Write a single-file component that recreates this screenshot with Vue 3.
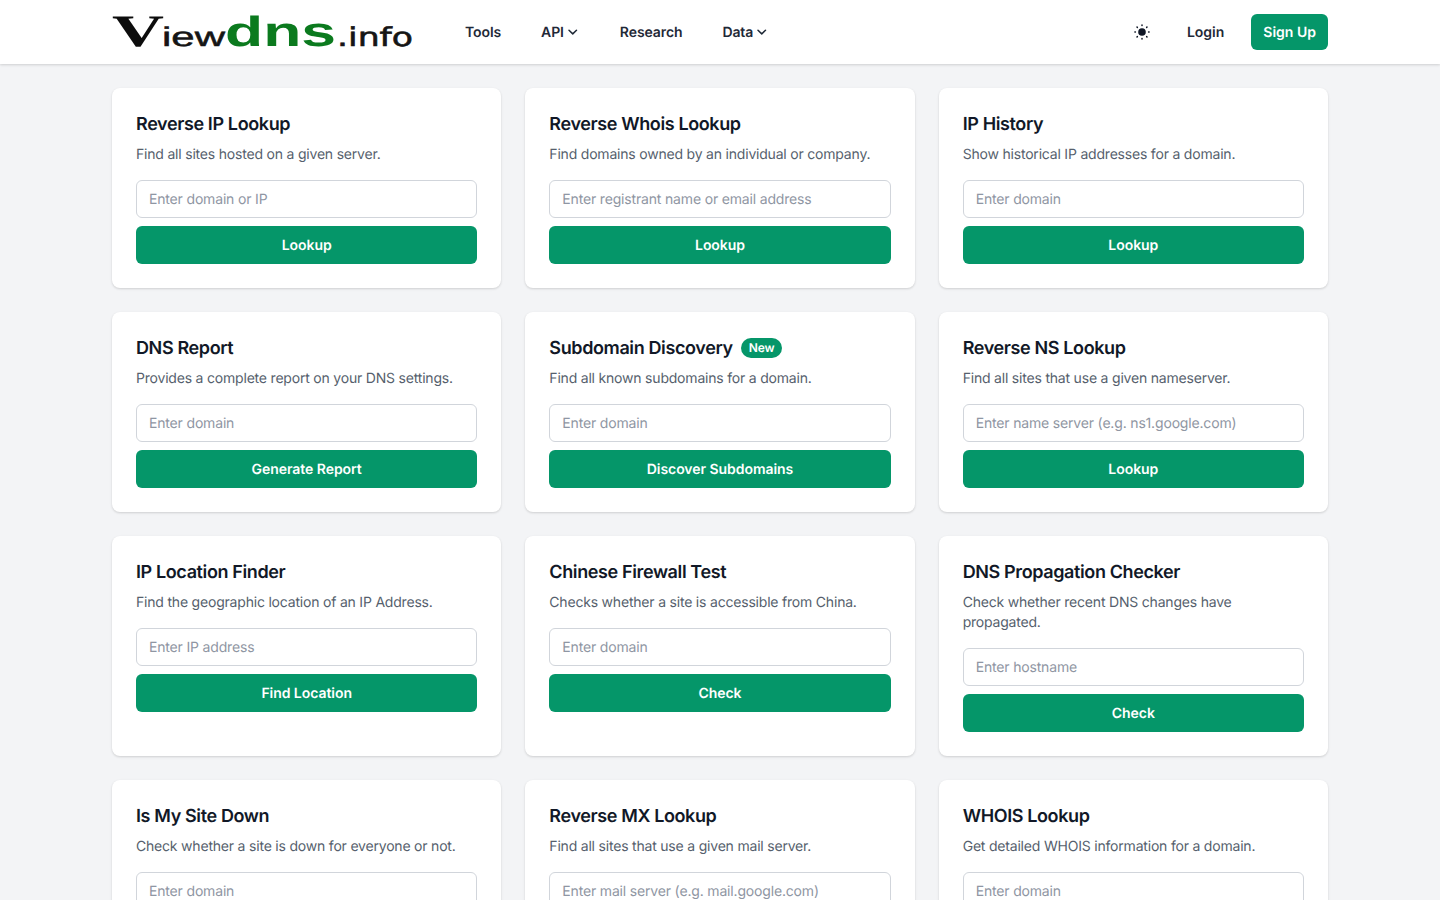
<script setup>
  const tools = [
    { title: 'Reverse IP Lookup', desc: 'Find all sites hosted on a given server.', placeholder: 'Enter domain or IP', action: 'Lookup' },
    { title: 'Reverse Whois Lookup', desc: 'Find domains owned by an individual or company.', placeholder: 'Enter registrant name or email address', action: 'Lookup' },
    { title: 'IP History', desc: 'Show historical IP addresses for a domain.', placeholder: 'Enter domain', action: 'Lookup' },
    { title: 'DNS Report', desc: 'Provides a complete report on your DNS settings.', placeholder: 'Enter domain', action: 'Generate Report' },
    { title: 'Subdomain Discovery', badge: 'New', desc: 'Find all known subdomains for a domain.', placeholder: 'Enter domain', action: 'Discover Subdomains' },
    { title: 'Reverse NS Lookup', desc: 'Find all sites that use a given nameserver.', placeholder: 'Enter name server (e.g. ns1.google.com)', action: 'Lookup' },
    { title: 'IP Location Finder', desc: 'Find the geographic location of an IP Address.', placeholder: 'Enter IP address', action: 'Find Location' },
    { title: 'Chinese Firewall Test', desc: 'Checks whether a site is accessible from China.', placeholder: 'Enter domain', action: 'Check' },
    { title: 'DNS Propagation Checker', desc: 'Check whether recent DNS changes have propagated.', placeholder: 'Enter hostname', action: 'Check' },
    { title: 'Is My Site Down', desc: 'Check whether a site is down for everyone or not.', placeholder: 'Enter domain', action: 'Check' },
    { title: 'Reverse MX Lookup', desc: 'Find all sites that use a given mail server.', placeholder: 'Enter mail server (e.g. mail.google.com)', action: 'Lookup' },
    { title: 'WHOIS Lookup', desc: 'Get detailed WHOIS information for a domain.', placeholder: 'Enter domain', action: 'Lookup' },
  ];
</script>

<template>
  <div class="page">
    <header class="topbar">
      <div class="topbar-inner">
        <a class="logo" href="#" aria-label="ViewDNS.info">
          <svg width="302" height="48" viewBox="0 0 302 48">
            <text class="logo-v" x="0" y="38" textLength="52" lengthAdjust="spacingAndGlyphs">V</text>
            <text class="logo-iew" x="50" y="38" textLength="63" lengthAdjust="spacingAndGlyphs">iew</text>
            <text class="logo-dns" x="113" y="37.5" textLength="111" lengthAdjust="spacingAndGlyphs">dns</text>
            <text class="logo-info" x="225" y="38" textLength="76" lengthAdjust="spacingAndGlyphs">.info</text>
          </svg>
        </a>
        <nav class="nav">
          <a href="#">Tools</a>
          <a href="#">API
            <svg class="chev" viewBox="0 0 14 14"><path d="M3 5.2 6.75 8.9 10.5 5.2" /></svg>
          </a>
          <a href="#">Research</a>
          <a href="#">Data
            <svg class="chev" viewBox="0 0 14 14"><path d="M3 5.2 6.75 8.9 10.5 5.2" /></svg>
          </a>
        </nav>
        <div class="actions">
          <svg class="sun" width="16" height="16" viewBox="0 0 16 16">
            <circle cx="8" cy="8" r="3.8" />
            <path d="M8 .9v.5M8 14.6v.5M.9 8h.5M14.6 8h.5M3 3l.35.35M12.65 12.65l.35.35M3 13l.35-.35M12.65 3.35 13 3" />
          </svg>
          <a class="login" href="#">Login</a>
          <a class="signup" href="#">Sign Up</a>
        </div>
      </div>
    </header>

    <main class="grid">
      <section v-for="tool in tools" :key="tool.title" class="card">
        <h2>{{ tool.title }}<span v-if="tool.badge" class="badge">{{ tool.badge }}</span></h2>
        <p>{{ tool.desc }}</p>
        <form class="lookup" @submit.prevent>
          <input type="text" :placeholder="tool.placeholder">
          <button type="submit">{{ tool.action }}</button>
        </form>
      </section>
    </main>
  </div>
</template>

<style>
  body {
    background: #f3f4f6;
  }
</style>

<style scoped>
  .page {
    height: 100vh;
    overflow: hidden;
    background: #f3f4f6;
    font-family: Inter, "Liberation Sans", sans-serif;
    color: #111827;
    text-rendering: geometricPrecision;
  }
  a {
    text-decoration: none;
    color: inherit;
  }

  .topbar {
    height: 64px;
    background: #fff;
    box-shadow: 0 1px 3px rgba(0, 0, 0, 0.1), 0 1px 2px rgba(0, 0, 0, 0.06);
    position: relative;
  }
  .topbar-inner {
    width: 1216px;
    height: 64px;
    margin: 0 auto;
    display: flex;
    align-items: center;
  }
  .logo {
    display: flex;
    width: 302px;
  }
  .logo svg {
    overflow: visible;
  }
  .logo-v {
    font: 700 45px "Liberation Serif", serif;
    fill: #0c0c0c;
  }
  .logo-iew {
    font: 400 27px "Liberation Sans", sans-serif;
    fill: #151515;
    stroke: #151515;
    stroke-width: 0.5;
  }
  .logo-dns {
    font: 700 42px "Liberation Sans", sans-serif;
    fill: #0b7a1e;
  }
  .logo-info {
    font: 400 26px "DejaVu Sans", sans-serif;
    fill: #151515;
    stroke: #151515;
    stroke-width: 0.6;
  }

  .nav {
    display: flex;
    gap: 40px;
    margin-left: 51px;
    font-size: 14px;
    font-weight: 600;
    letter-spacing: -0.1px;
    color: #1f2937;
  }
  .nav a {
    display: flex;
    align-items: center;
    gap: 2px;
  }
  .chev {
    width: 14px;
    height: 14px;
    fill: none;
    stroke: #1f2937;
    stroke-width: 1.5;
    stroke-linecap: round;
    stroke-linejoin: round;
  }

  .actions {
    margin-left: auto;
    display: flex;
    align-items: center;
    font-size: 14px;
    font-weight: 600;
    color: #1f2937;
  }
  .sun {
    fill: #111827;
    stroke: #111827;
  }
  .sun circle {
    stroke: none;
  }
  .sun path {
    stroke-width: 1.5;
    stroke-linecap: round;
  }
  .login {
    margin-left: 37px;
  }
  .signup {
    margin-left: 27px;
    height: 36px;
    padding: 0 12px;
    display: flex;
    align-items: center;
    border-radius: 6px;
    background: #059669;
    color: #fff;
  }

  .grid {
    width: 1216px;
    margin: 0 auto;
    padding-top: 24px;
    display: grid;
    grid-template-columns: repeat(3, 1fr);
    gap: 24px;
  }
  .card {
    background: #fff;
    border-radius: 8px;
    padding: 24px;
    box-shadow: 0 1px 3px rgba(0, 0, 0, 0.1), 0 1px 2px rgba(0, 0, 0, 0.06);
  }
  h2 {
    margin: 0;
    display: flex;
    align-items: center;
    gap: 8px;
    font-size: 18px;
    line-height: 26px;
    font-weight: 600;
    letter-spacing: -0.38px;
    color: #111827;
  }
  .badge {
    height: 20px;
    margin-bottom: 2px;
    padding: 0 8px;
    display: flex;
    align-items: center;
    border-radius: 10px;
    background: #059669;
    color: #fff;
    font-size: 12px;
    font-weight: 600;
    letter-spacing: -0.1px;
  }
  p {
    margin: 7px 0 15px;
    font-size: 14px;
    line-height: 20px;
    letter-spacing: -0.2px;
    color: #565f6d;
  }
  .lookup {
    display: flex;
    flex-direction: column;
    gap: 8px;
  }
  input {
    box-sizing: border-box;
    width: 100%;
    height: 38px;
    padding: 0 12px;
    border: 1px solid #d1d5db;
    border-radius: 6px;
    background: #fff;
    font: 400 14px Inter, "Liberation Sans", sans-serif;
    letter-spacing: -0.17px;
    color: #111827;
    outline: none;
    text-rendering: geometricPrecision;
  }
  input::placeholder {
    color: #8f96a3;
    opacity: 1;
  }
  button {
    height: 38px;
    padding: 0;
    border: 0;
    border-radius: 6px;
    background: #059669;
    color: #fff;
    font: 600 14px Inter, "Liberation Sans", sans-serif;
    letter-spacing: -0.05px;
    text-rendering: geometricPrecision;
  }
</style>
